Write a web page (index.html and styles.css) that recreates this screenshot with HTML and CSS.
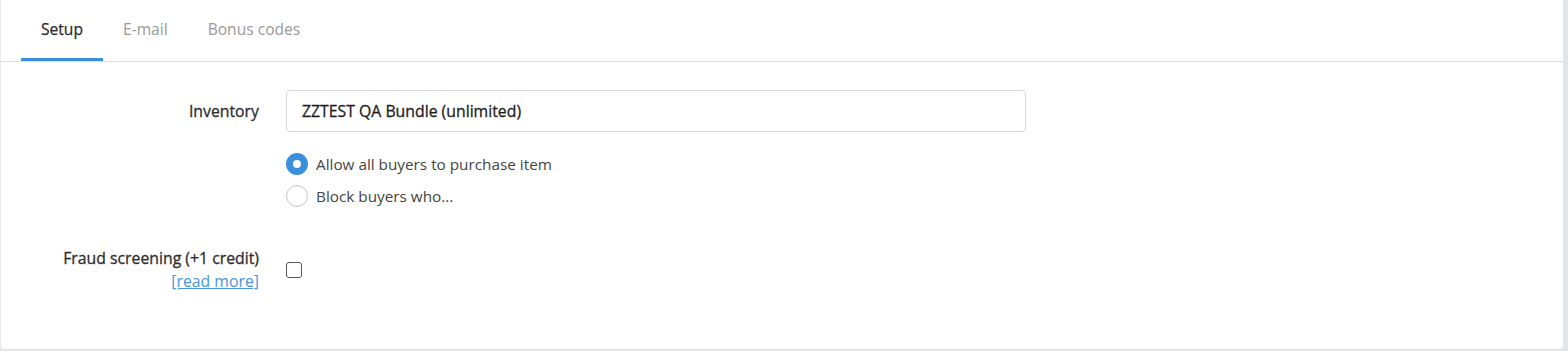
FILE: index.html
```html
<!DOCTYPE html>
<html lang="en">
<head>
    <meta charset="UTF-8">
    <meta name="viewport" content="width=device-width, initial-scale=1.0">
    <title>Item setup</title>
    <link rel="stylesheet" href="styles.css">
</head>
<body>
    <div class="page">
        <div class="tabs">
            <div class="tab active">Setup</div>
            <div class="tab">E-mail</div>
            <div class="tab">Bonus codes</div>
        </div>
        <div class="panel">
            <div class="row">
                <div class="label">Inventory</div>
                <div class="field">
                    <div class="input">ZZTEST QA Bundle (unlimited)</div>
                </div>
            </div>
            <div class="row radios-row">
                <div class="label"></div>
                <div class="field">
                    <div class="radio-option">
                        <span class="radio checked"></span>
                        <span>Allow all buyers to purchase item</span>
                    </div>
                    <div class="radio-option">
                        <span class="radio"></span>
                        <span>Block buyers who...</span>
                    </div>
                </div>
            </div>
            <div class="row fraud-row">
                <div class="label">
                    Fraud screening (+1 credit)<br>
                    <a href="#" class="read-more">[read more]</a>
                </div>
                <div class="field">
                    <span class="checkbox"></span>
                </div>
            </div>
        </div>
    </div>
</body>
</html>
```

FILE: styles.css
```css
body {
    margin: 0;
    font-family: "Open Sans", "Noto Sans", sans-serif;
    font-size: 15.3px;
    color: #333;
    background: #e1e5e8;
    height: 351px;
    overflow: hidden;
}

.page {
    width: 1562px;
    height: 349px;
    background: #fff;
    border-left: 1px solid #e6e8ea;
    border-radius: 0 0 4px 4px;
    display: flex;
    flex-direction: column;
}

.tabs {
    display: flex;
    height: 61px;
    padding-left: 20px;
    border-bottom: 1px solid #dcdfe2;
}

.tab {
    padding: 0 20px;
    line-height: 58px;
    font-size: 15.6px;
    color: #999;
    border-bottom: 3px solid transparent;
}

.tab.active {
    color: #2a2a2a;
    border-bottom-color: #3a8fdd;
    -webkit-text-stroke: 0.25px currentColor;
}

.panel {
    flex: 1;
    padding-top: 28px;
}

.row {
    display: grid;
    grid-template-columns: 258px 740px;
    column-gap: 27px;
}

.label {
    text-align: right;
    font-size: 15.8px;
    color: #2e2e2e;
    line-height: 23px;
    -webkit-text-stroke: 0.3px currentColor;
}

.row:first-child .label {
    padding-top: 10px;
}

.input {
    height: 40px;
    border: 1px solid #d5d8da;
    border-radius: 4px;
    padding: 0 15px;
    line-height: 40px;
    font-size: 15.8px;
    color: #1e1e1e;
    -webkit-text-stroke: 0.3px currentColor;
}

.radios-row {
    margin-top: 21px;
}

.radio-option {
    display: flex;
    align-items: center;
    gap: 8px;
    height: 22px;
    margin-bottom: 10px;
    color: #444;
}

.radio {
    width: 20px;
    height: 20px;
    border: 1px solid #c6c8ca;
    border-radius: 50%;
    box-sizing: content-box;
    flex-shrink: 0;
}

.radio.checked {
    width: 8px;
    height: 8px;
    border: 7px solid #3b8fdf;
}

.fraud-row {
    margin-top: 30px;
}

.read-more {
    color: #4a95dc;
    -webkit-text-stroke: 0;
}

.fraud-row .field {
    padding-top: 15px;
}

.checkbox {
    display: block;
    width: 14px;
    height: 14px;
    border: 1.5px solid #555;
    border-radius: 3px;
}
```
